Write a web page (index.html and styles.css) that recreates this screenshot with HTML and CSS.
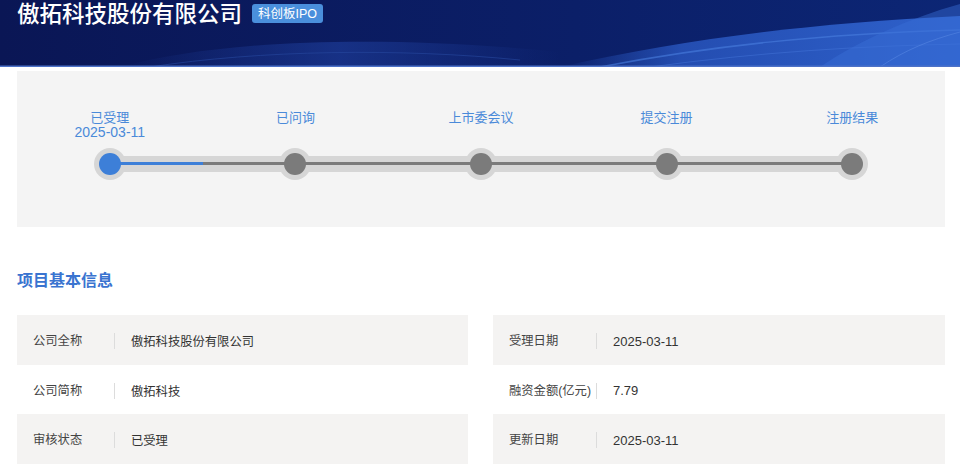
FILE: index.html
```html
<!DOCTYPE html>
<html lang="zh-CN">
<head>
    <meta charset="UTF-8">
    <meta name="viewport" content="width=device-width, initial-scale=1.0">
    <title>傲拓科技股份有限公司 - 科创板IPO</title>
    <link rel="stylesheet" href="styles.css">
</head>
<body>
    <div class="banner">
        <svg class="banner-bg" viewBox="0 0 960 67" preserveAspectRatio="none" aria-hidden="true">
            <defs>
                <linearGradient id="bg" x1="0" y1="0" x2="1" y2="0">
                    <stop offset="0" stop-color="#0a1655"/>
                    <stop offset="0.6" stop-color="#0b1f68"/>
                    <stop offset="1" stop-color="#0c2675"/>
                </linearGradient>
                <linearGradient id="wave" x1="0" y1="0" x2="1" y2="0">
                    <stop offset="0" stop-color="#2a58c2" stop-opacity="0"/>
                    <stop offset="0.3" stop-color="#2a58c2" stop-opacity="0.8"/>
                    <stop offset="1" stop-color="#2f62cc"/>
                </linearGradient>
                <linearGradient id="faint" x1="0" y1="0" x2="1" y2="0">
                    <stop offset="0" stop-color="#1c3a95" stop-opacity="0"/>
                    <stop offset="0.5" stop-color="#1c3a95" stop-opacity="0.7"/>
                    <stop offset="1" stop-color="#1c3a95" stop-opacity="0"/>
                </linearGradient>
            </defs>
            <rect width="960" height="67" fill="url(#bg)"/>
            <path d="M120 67 C 220 40, 380 34, 560 52 L 560 67 Z" fill="url(#faint)"/>
            <path d="M150 67 C 260 50, 400 48, 520 60" stroke="#26479f" stroke-width="1" fill="none" opacity="0.6"/>
            <path d="M560 67 C 680 40, 800 24, 960 16 L 960 67 Z" fill="url(#wave)"/>
            <path d="M600 67 C 710 46, 820 34, 960 30" stroke="#4a7ee0" stroke-width="1.5" fill="none" opacity="0.6"/>
            <path d="M650 67 C 760 52, 860 46, 960 44" stroke="#4a7ee0" stroke-width="1" fill="none" opacity="0.4"/>
            <path d="M820 67 C 860 40, 910 18, 960 4 L 960 67 Z" fill="#3a6fd6" opacity="0.45"/>
            <path d="M880 67 C 905 50, 930 40, 960 32" stroke="#5b8ce6" stroke-width="1" fill="none" opacity="0.5"/>
            <rect y="65.5" width="960" height="1.5" fill="#4d72c8"/>
        </svg>
        <h1 class="company">傲拓科技股份有限公司</h1>
        <span class="board-tag">科创板IPO</span>
    </div>

    <div class="main">
        <div class="progress-panel">
            <div class="steps">
                <div class="track"></div>
                <div class="track-line">
                    <div class="track-done" style="width: 12.5%"></div>
                </div>
                <div class="step done">
                    <div class="step-label">已受理<br><span class="step-date">2025-03-11</span></div>
                    <div class="step-node"><div class="step-dot"></div></div>
                </div>
                <div class="step">
                    <div class="step-label">已问询</div>
                    <div class="step-node"><div class="step-dot"></div></div>
                </div>
                <div class="step">
                    <div class="step-label">上市委会议</div>
                    <div class="step-node"><div class="step-dot"></div></div>
                </div>
                <div class="step">
                    <div class="step-label">提交注册</div>
                    <div class="step-node"><div class="step-dot"></div></div>
                </div>
                <div class="step">
                    <div class="step-label">注册结果</div>
                    <div class="step-node"><div class="step-dot"></div></div>
                </div>
            </div>
        </div>

        <h2 class="section-title">项目基本信息</h2>

        <div class="info">
            <div class="info-col left">
                <div class="info-row">
                    <span class="info-key">公司全称</span>
                    <span class="info-val">傲拓科技股份有限公司</span>
                </div>
                <div class="info-row">
                    <span class="info-key">公司简称</span>
                    <span class="info-val">傲拓科技</span>
                </div>
                <div class="info-row">
                    <span class="info-key">审核状态</span>
                    <span class="info-val">已受理</span>
                </div>
            </div>
            <div class="info-col right">
                <div class="info-row">
                    <span class="info-key">受理日期</span>
                    <span class="info-val num">2025-03-11</span>
                </div>
                <div class="info-row">
                    <span class="info-key">融资金额(亿元)</span>
                    <span class="info-val num">7.79</span>
                </div>
                <div class="info-row">
                    <span class="info-key">更新日期</span>
                    <span class="info-val num">2025-03-11</span>
                </div>
            </div>
        </div>
    </div>
</body>
</html>
```

FILE: styles.css
```css
body {
    margin: 0;
    padding: 0;
    font-family: "Liberation Sans", "Noto Sans CJK SC", sans-serif;
    background-color: #fff;
    color: #333;
}

/* 顶部横幅 */
.banner {
    position: relative;
    height: 67px;
    display: flex;
    align-items: flex-start;
    padding: 0 17px;
    overflow: hidden;
}

.banner-bg {
    position: absolute;
    left: 0;
    top: 0;
    width: 100%;
    height: 100%;
}

.company {
    position: relative;
    margin: 2px 0 0;
    font-size: 22.5px;
    line-height: 26px;
    font-weight: 500;
    color: #fff;
}

.board-tag {
    position: relative;
    margin: 4px 0 0 10px;
    padding: 1px 6px 0;
    height: 18px;
    line-height: 18px;
    font-size: 12.5px;
    color: #fff;
    background-color: #4a8fdc;
    border-radius: 3px;
}

.main {
    padding: 4px 15px 0 17px;
}

/* 进度条 */
.progress-panel {
    background-color: #f4f4f4;
    padding: 38px 0 47px;
}

.steps {
    position: relative;
    display: grid;
    grid-template-columns: repeat(5, 1fr);
}

.track {
    position: absolute;
    left: 10%;
    right: 10%;
    bottom: 8px;
    height: 16px;
    background-color: #d6d6d6;
}

.track-line {
    position: absolute;
    z-index: 1;
    left: 10%;
    right: 10%;
    bottom: 15px;
    height: 3px;
    background-color: #7b7b7b;
}

.track-done {
    height: 100%;
    background-color: #3d7fd8;
}

.step {
    display: flex;
    flex-direction: column;
    align-items: center;
}

.step-label {
    box-sizing: border-box;
    height: 39px;
    padding-top: 2px;
    font-size: 13px;
    line-height: 14px;
    color: #4a8ad9;
    text-align: center;
}

.step-date {
    font-size: 14px;
}

.step-node {
    display: flex;
    align-items: center;
    justify-content: center;
    width: 32px;
    height: 32px;
    border-radius: 50%;
    background-color: #d6d6d6;
}

.step-dot {
    position: relative;
    z-index: 2;
    width: 22px;
    height: 22px;
    border-radius: 50%;
    background-color: #7b7b7b;
}

.step.done .step-dot {
    background-color: #3d7fd8;
}

/* 基本信息 */
.section-title {
    margin: 44px 0 24px;
    font-size: 16px;
    line-height: 20px;
    font-weight: bold;
    color: #3a74d0;
}

.info {
    display: grid;
    grid-template-columns: 451px 452px;
    column-gap: 25px;
}

.info-row {
    box-sizing: border-box;
    display: flex;
    align-items: center;
    height: 49.5px;
    padding: 3px 0 0 16px;
    font-size: 12.3px;
}

.info-row:nth-child(odd) {
    background-color: #f4f3f2;
}

.info-key {
    color: #444;
    border-right: 1px solid #dcdcdc;
    height: 16px;
    line-height: 16px;
}

.left .info-key {
    width: 81px;
}

.right .info-key {
    width: 87px;
}

.info-val {
    color: #333;
    padding-left: 16px;
}

.info-val.num {
    font-size: 13px;
}
```
